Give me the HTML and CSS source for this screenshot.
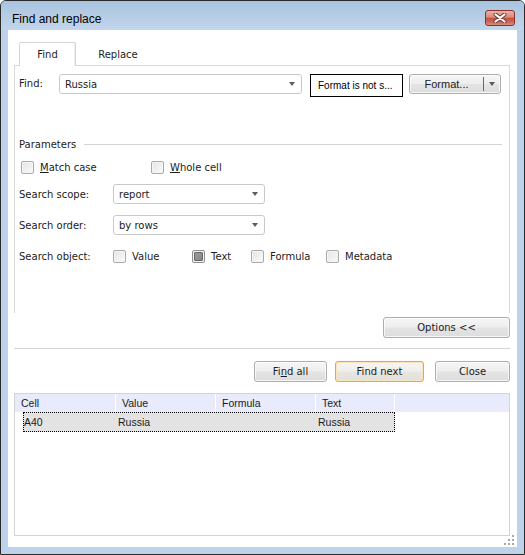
FILE: index.html
```html
<!DOCTYPE html>
<html>
<head>
<meta charset="utf-8">
<link rel="stylesheet" href="styles.css">
</head>
<body>
<div class="window">
  <div class="titlebar">
    <div class="title">Find and replace</div>
    <div class="close">
      <svg width="14" height="10" viewBox="0 0 14 10">
        <path d="M2.5 1.5 L11.5 8.5 M11.5 1.5 L2.5 8.5" stroke="#6b3a35" stroke-width="4" stroke-linecap="round"/>
        <path d="M2.5 1.5 L11.5 8.5 M11.5 1.5 L2.5 8.5" stroke="#ffffff" stroke-width="2.2" stroke-linecap="round"/>
      </svg>
    </div>
  </div>
  <div class="client">
    <div class="tabs">
      <div class="tab active">Find</div>
      <div class="tab replace">Replace</div>
    </div>
    <div class="panel">
      <div class="row1">
        <div class="lbl-find">Find:</div>
        <div class="combo combo-find"><span>Russia</span><span class="arrow"></span></div>
        <div class="fmtbox">Format is not s...</div>
        <div class="btn fmtbtn"><span class="fmt-main">Format...</span><span class="fmt-div"></span><span class="fmt-drop"><span class="arrow"></span></span></div>
      </div>
      <div class="params-head"><span>Parameters</span><span class="hline"></span></div>
      <div class="cb-row">
        <div class="cb-item"><span class="cb"></span><span><u>M</u>atch case</span></div>
        <div class="cb-item"><span class="cb"></span><span><u>W</u>hole cell</span></div>
      </div>
      <div class="field-row scope">
        <div class="flabel">Search scope:</div>
        <div class="combo combo-small"><span>report</span><span class="arrow"></span></div>
      </div>
      <div class="field-row order">
        <div class="flabel">Search order:</div>
        <div class="combo combo-small"><span>by rows</span><span class="arrow"></span></div>
      </div>
      <div class="field-row object">
        <div class="flabel">Search object:</div>
        <div class="obj-grid">
          <div class="cb-item"><span class="cb"></span><span>Value</span></div>
          <div class="cb-item"><span class="cb checked"><span class="cb-fill"></span></span><span>Text</span></div>
          <div class="cb-item"><span class="cb"></span><span>Formula</span></div>
          <div class="cb-item"><span class="cb"></span><span>Metadata</span></div>
        </div>
      </div>
    </div>
    <div class="options-row"><div class="btn btn-options">Options &lt;&lt;</div></div>
    <div class="sep"></div>
    <div class="actions">
      <div class="btn btn-findall">Fi<u>n</u>d all</div>
      <div class="btn btn-findnext default">Find next</div>
      <div class="btn btn-close">Close</div>
    </div>
    <div class="list">
      <div class="list-head">
        <div class="hcell c1">Cell</div>
        <div class="hcell c2">Value</div>
        <div class="hcell c3">Formula</div>
        <div class="hcell c4">Text</div>
      </div>
      <div class="list-row">
        <div class="rcell r1">A40</div>
        <div class="rcell r2">Russia</div>
        <div class="rcell r3"></div>
        <div class="rcell r4">Russia</div>
      </div>
    </div>
    <svg class="grip" width="12" height="12" viewBox="0 0 12 12">
      <g fill="#ffffff">
        <rect x="9" y="2" width="2" height="2"/><rect x="9" y="6" width="2" height="2"/><rect x="5" y="6" width="2" height="2"/>
        <rect x="9" y="10" width="2" height="2"/><rect x="5" y="10" width="2" height="2"/><rect x="1" y="10" width="2" height="2"/>
      </g>
      <g fill="#a8a8a8">
        <rect x="8" y="1" width="2" height="2"/><rect x="8" y="5" width="2" height="2"/><rect x="4" y="5" width="2" height="2"/>
        <rect x="8" y="9" width="2" height="2"/><rect x="4" y="9" width="2" height="2"/><rect x="0" y="9" width="2" height="2"/>
      </g>
    </svg>
  </div>
</div>
</body>
</html>
```
FILE: styles.css
```css
* { box-sizing: border-box; }
html, body { margin: 0; padding: 0; background: #ffffff; }
body {
  font-family: "DejaVu Sans", sans-serif;
  font-size: 10px;
  color: #1c1c1c;
}
u { text-decoration: underline; text-underline-offset: 1px; }

.window {
  width: 525px;
  height: 555px;
  border: 1px solid #2a2a2a;
  border-radius: 6px 6px 0 0;
  background: #bcd3eb;
  display: flex;
  flex-direction: column;
  overflow: hidden;
}
.titlebar {
  height: 29px;
  flex: none;
  display: flex;
  align-items: flex-start;
  padding-left: 11px;
  background: linear-gradient(#a9c3df, #c2d6ec);
}
.title {
  font-family: "Liberation Sans", sans-serif;
  font-size: 12px;
  line-height: 16px;
  margin-top: 10px;
  color: #000000;
}
.close {
  margin-left: auto;
  margin-right: 9px;
  margin-top: 9px;
  width: 30px;
  height: 16px;
  border: 1px solid #85352d;
  border-radius: 3px;
  background: linear-gradient(#eab0a4 0%, #d98a7c 45%, #c4513f 50%, #cf6a58 80%, #dc8e7c 100%);
  display: flex;
  align-items: center;
  justify-content: center;
}

.client {
  flex: 1;
  margin: 0 7px 7px 7px;
  background: #ffffff;
  padding: 12px 7px 0 6px;
  position: relative;
  display: flex;
  flex-direction: column;
}

.tabs {
  display: flex;
  height: 23px;
  padding-left: 5px;
  position: relative;
  z-index: 1;
}
.tab {
  height: 24px;
  display: flex;
  align-items: center;
  justify-content: center;
  font-size: 10px;
}
.tab.active {
  width: 57px;
  border: 1px solid #d5d5d5;
  border-bottom: none;
  border-radius: 2px 2px 0 0;
  background: #ffffff;
  box-shadow: inset -1px 0 0 #eeeeee;
}
.tab.replace {
  width: 76px;
  margin-left: 4px;
}

.panel {
  height: 248px;
  border: 1px solid #d9d9d9;
  border-bottom: none;
  padding: 8px 7px 0 4px;
}
.row1 {
  display: flex;
  align-items: flex-start;
}
.lbl-find {
  width: 40px;
  line-height: 20px;
}
.combo {
  height: 20px;
  border: 1px solid #c8c8c8;
  border-radius: 3px;
  display: flex;
  align-items: center;
  padding-left: 5px;
  background: #ffffff;
}
.arrow {
  width: 0;
  height: 0;
  border-left: 3.5px solid transparent;
  border-right: 3.5px solid transparent;
  border-top: 4px solid #5c5c5c;
  margin-left: auto;
  margin-right: 6px;
}
.combo-find { width: 243px; }
.combo-small { width: 152px; }

.fmtbox {
  margin-left: 8px;
  width: 93px;
  height: 23px;
  border: 1px solid #000000;
  font-family: "Liberation Sans", sans-serif;
  font-size: 10px;
  color: #000000;
  display: flex;
  align-items: center;
  padding-left: 7px;
  white-space: nowrap;
}

.btn {
  height: 21px;
  border: 1px solid #adadad;
  border-radius: 3px;
  background: linear-gradient(#f6f6f6 0%, #eeeeee 48%, #e4e4e4 52%, #dddddd 100%);
  display: flex;
  align-items: center;
  justify-content: center;
  box-shadow: inset 0 0 0 1px rgba(255,255,255,0.7);
}
.fmtbtn {
  margin-left: 6px;
  width: 92px;
  height: 20px;
  justify-content: flex-start;
  font-family: "Liberation Sans", sans-serif;
  font-size: 11px;
}
.fmt-main {
  width: 73px;
  text-align: center;
}
.fmt-div {
  width: 1px;
  height: 14px;
  background: #6a6a6a;
}
.fmt-drop {
  flex: 1;
  display: flex;
  align-items: center;
  justify-content: center;
}
.fmt-drop .arrow { margin: 0; }

.params-head {
  margin-top: 39px;
  height: 16px;
  display: flex;
  align-items: center;
}
.hline {
  flex: 1;
  height: 1px;
  background: #d3d3d3;
  margin-left: 8px;
}

.cb-row {
  margin-top: 5px;
  height: 20px;
  display: grid;
  grid-template-columns: 130px auto;
  padding-left: 2px;
  align-items: center;
}
.cb-item {
  display: flex;
  align-items: center;
}
.cb {
  width: 13px;
  height: 13px;
  flex: none;
  border: 1px solid #aaaaaa;
  border-radius: 2px;
  background: linear-gradient(135deg, #e4e4e4, #fbfbfb);
  box-shadow: inset 0 0 0 1px #f5f5f5;
  margin-right: 6px;
  display: flex;
  align-items: center;
  justify-content: center;
}
.cb.checked { border-color: #8e8e8e; }
.cb-fill {
  width: 9px;
  height: 9px;
  border: 1px solid #666666;
  border-radius: 1px;
  background: linear-gradient(135deg, #9c9c9c, #868686);
}

.field-row {
  display: flex;
  align-items: center;
  height: 20px;
}
.scope { margin-top: 7px; }
.order { margin-top: 11px; }
.object { margin-top: 11px; }
.flabel { width: 94px; }
.obj-grid {
  display: grid;
  grid-template-columns: 79px 59px 75px auto;
  align-items: center;
}

.options-row {
  margin-top: 4px;
  display: flex;
  justify-content: flex-end;
}
.btn-options { width: 127px; }

.sep {
  margin-top: 10px;
  height: 1px;
  background: #d5d5d5;
}
.actions {
  margin-top: 12px;
  display: flex;
  justify-content: flex-end;
}
.btn-findall { width: 73px; }
.btn-findnext { width: 89px; margin-left: 8px; }
.btn-close { width: 75px; margin-left: 11px; }
.btn.default {
  border-color: #e6a54e;
  background: linear-gradient(#f8f6f2 0%, #f0eeea 48%, #e8e6e2 52%, #e2e0dc 100%);
  box-shadow: inset 0 0 0 1px #fbe3bd;
}

.list {
  margin-top: 11px;
  height: 143px;
  border: 1px solid #d3d3d3;
  font-family: "Liberation Sans", sans-serif;
  font-size: 10.5px;
  color: #1a1a1a;
}
.list-head {
  height: 18px;
  display: flex;
  background: #e9eafb;
}
.hcell {
  height: 18px;
  display: flex;
  align-items: center;
  padding-left: 6px;
  border-right: 1px solid #ffffff;
}
.c1 { width: 101px; }
.c2 { width: 100px; }
.c3 { width: 100px; }
.c4 { width: 79px; }

.list-row {
  margin-left: 8px;
  width: 372px;
  height: 20px;
  display: flex;
  background: #e3e3e3;
  border: 1px dotted #000000;
}
.rcell {
  display: flex;
  align-items: center;
  padding-left: 2px;
}
.r1 { width: 92px; padding-left: 0; }
.r2 { width: 100px; }
.r3 { width: 100px; }
.r4 { flex: 1; }

.grip {
  position: absolute;
  right: 1px;
  bottom: 1px;
}
```
